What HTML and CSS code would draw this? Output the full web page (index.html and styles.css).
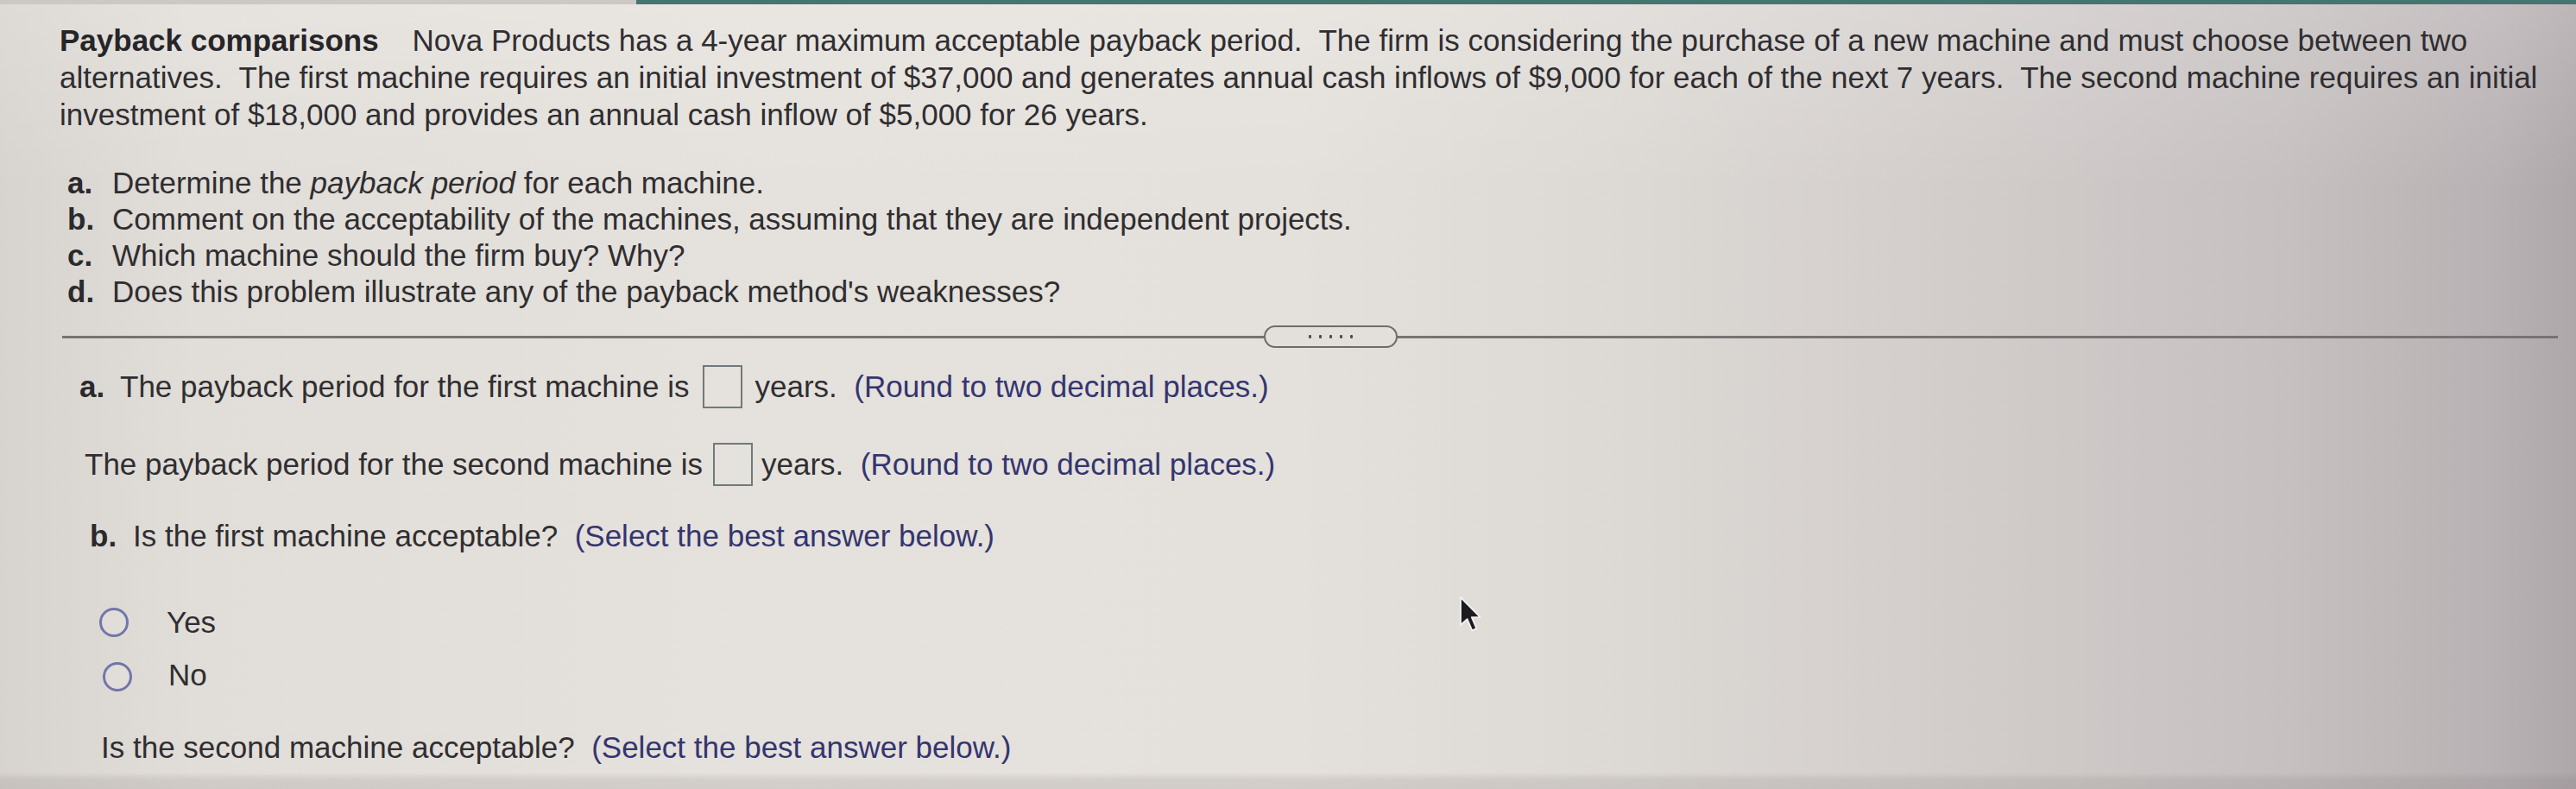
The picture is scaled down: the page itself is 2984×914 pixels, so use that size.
FILE: index.html
```html
<!DOCTYPE html>
<html lang="en">
<head>
<meta charset="utf-8">
<title>Payback comparisons</title>
<link rel="stylesheet" href="styles.css">
</head>
<body>
<div class="page">
  <div class="topbar"><div class="topbar-left"></div><div class="topbar-right"></div></div>

  <div class="question">
    <p class="intro"><b>Payback comparisons</b>&nbsp;&nbsp;&nbsp; Nova Products has a 4-year maximum acceptable payback period.&nbsp; The firm is considering the purchase of a new machine and must choose between two<br>alternatives.&nbsp; The first machine requires an initial investment of $37,000 and generates annual cash inflows of $9,000 for each of the next 7 years.&nbsp; The second machine requires an initial<br>investment of $18,000 and provides an annual cash inflow of $5,000 for 26 years.</p>
    <ol class="parts">
      <li><span class="label">a.</span><span>Determine the <i>payback period</i> for each machine.</span></li>
      <li><span class="label">b.</span><span>Comment on the acceptability of the machines, assuming that they are independent projects.</span></li>
      <li><span class="label">c.</span><span>Which machine should the firm buy? Why?</span></li>
      <li><span class="label">d.</span><span>Does this problem illustrate any of the payback method's weaknesses?</span></li>
    </ol>
  </div>

  <div class="divider">
    <span class="line line-left"></span>
    <span class="grip"><span class="dot"></span><span class="dot"></span><span class="dot"></span><span class="dot"></span><span class="dot"></span></span>
    <span class="line line-right"></span>
  </div>

  <div class="answers">
    <div class="ans-row row-a"><span class="label label-a">a.</span>The payback period for the first machine is<span class="answer-box"></span>years.&nbsp; <span class="hint">(Round to two decimal places.)</span></div>
    <div class="ans-row row-a2">The payback period for the second machine is<span class="answer-box"></span>years.&nbsp; <span class="hint">(Round to two decimal places.)</span></div>
    <div class="ans-row row-b"><span class="label label-b">b.</span>Is the first machine acceptable?&nbsp; <span class="hint">(Select the best answer below.)</span></div>
    <div class="ans-row choice choice-yes"><span class="radio"></span>Yes</div>
    <div class="ans-row choice choice-no"><span class="radio"></span>No</div>
    <div class="ans-row row-b2">Is the second machine acceptable?&nbsp; <span class="hint">(Select the best answer below.)</span></div>
  </div>

  <svg class="cursor" width="28" height="44" viewBox="0 0 14 22" aria-hidden="true">
    <path d="M1 1 L1 17 L4.8 13.6 L7.6 20.2 L10.2 19.1 L7.4 12.6 L12.4 12.6 Z" fill="#1c1c1e" stroke="#f2f2f2" stroke-width="0.9" stroke-linejoin="round"/>
  </svg>
</div>
</body>
</html>
```

FILE: styles.css
```css
html, body {
  margin: 0;
  padding: 0;
}

body {
  background: #e2ded9;
}

.page {
  position: relative;
  width: 2984px;
  height: 914px;
  overflow: hidden;
  font-family: "Liberation Sans", Arial, sans-serif;
  font-size: 35px;
  color: #2f2e31;
  background:
    linear-gradient(to bottom, rgba(255,255,255,0.18) 0px, rgba(255,255,255,0) 220px, rgba(0,0,0,0) 895px, rgba(110,100,100,0.14) 903px, rgba(110,100,100,0.16) 914px),
    linear-gradient(to right, #d7d3ce 0px, #e1ddd8 220px, #e5e1dc 900px, #e4e0db 1500px, #dcd8d4 1900px, #d1ccca 2300px, #c6c0c0 2650px, #b8b1b3 2900px, #aea7aa 2984px);
}

.topbar {
  display: flex;
  height: 5px;
}

.topbar-left {
  width: 737px;
  background: #cdc8c3;
}

.topbar-right {
  flex: 1;
  background: #44766f;
}

.question {
  padding: 20px 0 0 69px;
}

.intro {
  margin: 0;
  line-height: 43px;
  white-space: nowrap;
}

.intro b {
  color: #262529;
}

.parts {
  list-style: none;
  margin: 37px 0 0;
  padding: 0 0 0 9px;
  line-height: 42px;
  white-space: nowrap;
}

.parts li {
  display: flex;
}

.parts .label {
  width: 52px;
  flex: none;
  font-weight: bold;
  color: #2a292d;
}

.divider {
  display: flex;
  align-items: center;
  margin: 18px 21px 0 72px;
}

.line {
  height: 3px;
  background: #767373;
}

.line-left {
  width: 1392px;
  flex: none;
}

.line-right {
  flex: 1;
}

.grip {
  box-sizing: border-box;
  width: 155px;
  height: 26px;
  border: 2px solid #6e6b6b;
  border-radius: 13px;
  display: flex;
  align-items: center;
  justify-content: center;
  gap: 9px;
  background: #e3dfda;
}

.dot {
  width: 3px;
  height: 4px;
  border-radius: 1px;
  background: #4f4d4d;
}

.answers {
  padding-top: 20px;
}

.ans-row {
  line-height: 43px;
  white-space: nowrap;
}

.label {
  display: inline-block;
  font-weight: bold;
  color: #2a292d;
}

.hint {
  color: #34356f;
}

.answer-box {
  display: inline-block;
  box-sizing: border-box;
  width: 46px;
  height: 50px;
  border: 2px solid #6f7a7a;
  vertical-align: -13px;
  margin: 0 14px 0 16px;
}

.row-a {
  padding-left: 92px;
}

.label-a {
  width: 47px;
}

.row-a2 {
  margin-top: 40px;
  padding-left: 98px;
}

.row-a2 .answer-box {
  margin: 0 10px 0 12px;
}

.row-b {
  margin-top: 36px;
  padding-left: 104px;
}

.label-b {
  width: 50px;
}

.radio {
  display: inline-block;
  box-sizing: border-box;
  width: 34px;
  height: 34px;
  border: 3px solid #7176ab;
  border-radius: 50%;
  background: rgba(255,255,255,0.12);
}

.choice-yes {
  margin-top: 57px;
  padding-left: 115px;
}

.choice-yes .radio {
  vertical-align: -5px;
  margin-right: 44px;
}

.choice-no {
  margin-top: 18px;
  padding-left: 119px;
}

.choice-no .radio {
  vertical-align: -7px;
  margin-right: 42px;
}

.row-b2 {
  margin-top: 41px;
  padding-left: 117px;
}

.cursor {
  position: absolute;
  left: 1690px;
  top: 690px;
}
```
